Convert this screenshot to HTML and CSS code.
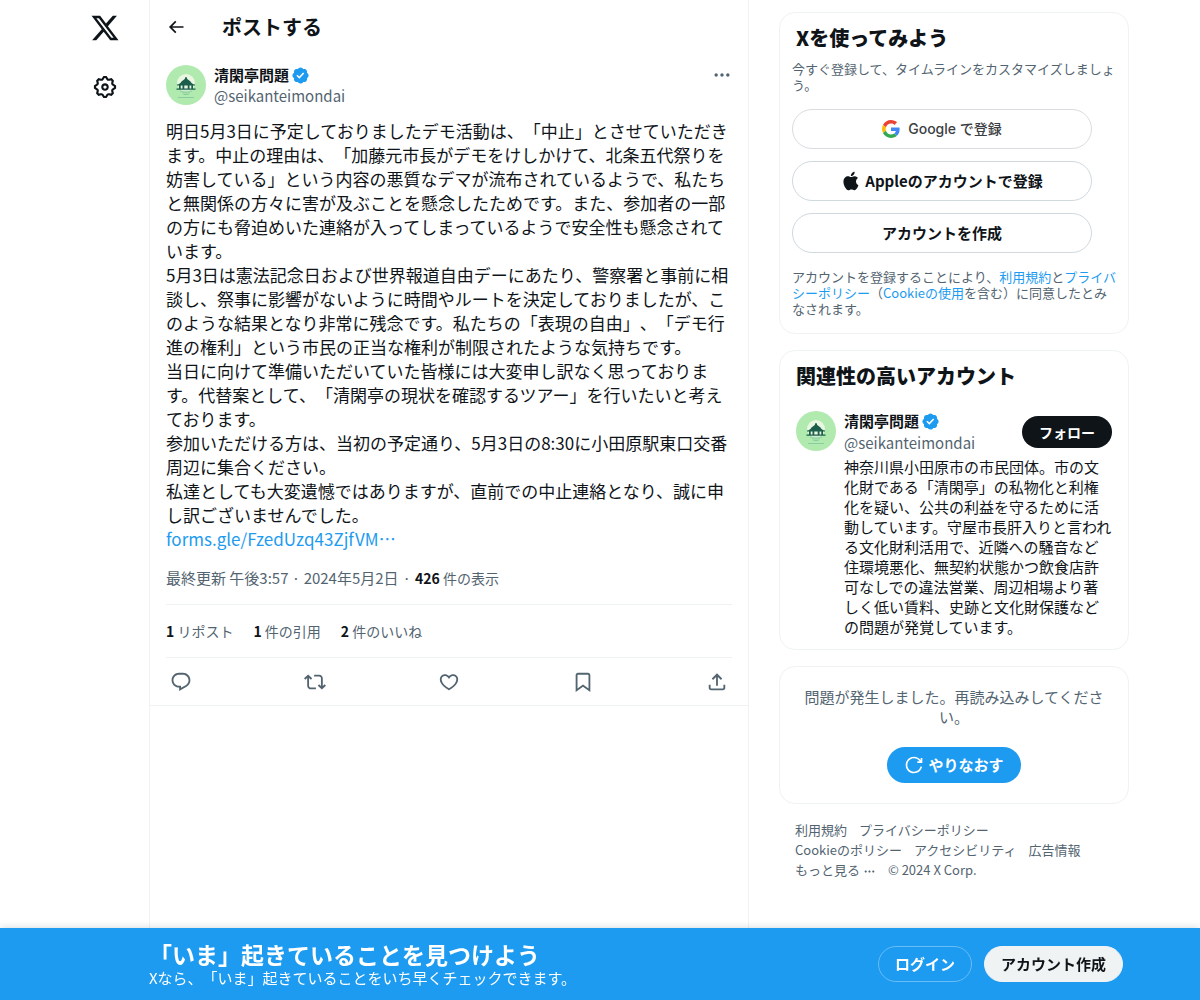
FILE: index.html
```html
<!DOCTYPE html>
<html lang="ja">
  <head>
    <meta charset="utf-8" />
    <title>清閑亭問題 / X</title>
    <meta name="viewport" content="width=device-width, initial-scale=1" />
    <link rel="stylesheet" href="styles.css">
  </head>
  <body>
    <svg class="symbols" aria-hidden="true">
      <symbol id="icon-verified" viewBox="0 0 22 22">
        <path fill="#1d9bf0" d="M20.396 11c-.018-.646-.215-1.275-.57-1.816-.354-.54-.852-.972-1.438-1.246.223-.607.27-1.264.14-1.897-.131-.634-.437-1.218-.882-1.687-.47-.445-1.053-.75-1.687-.882-.633-.13-1.29-.083-1.897.14-.273-.587-.704-1.086-1.245-1.44S11.647 1.62 11 1.604c-.646.017-1.273.213-1.813.568s-.969.854-1.24 1.44c-.608-.223-1.267-.272-1.902-.14-.635.13-1.22.436-1.69.882-.445.47-.749 1.055-.878 1.688-.13.633-.08 1.29.144 1.896-.587.274-1.087.705-1.443 1.245-.356.54-.555 1.17-.574 1.817.02.647.218 1.276.574 1.817.356.54.856.972 1.443 1.245-.224.606-.274 1.263-.144 1.896.13.634.433 1.218.877 1.688.47.443 1.054.747 1.687.878.633.132 1.29.084 1.897-.136.274.586.705 1.084 1.246 1.439.54.354 1.17.551 1.816.569.647-.016 1.276-.213 1.817-.567s.972-.854 1.245-1.44c.604.239 1.266.296 1.903.164.636-.132 1.22-.447 1.68-.907.46-.46.776-1.044.908-1.681s.075-1.299-.165-1.903c.586-.274 1.084-.705 1.439-1.246.354-.54.551-1.17.569-1.816zM9.662 14.85l-3.429-3.428 1.293-1.302 2.072 2.072 4.4-4.794 1.347 1.246z" />
      </symbol>
      <symbol id="avatar" viewBox="0 0 40 40">
        <circle cx="20" cy="20" r="20" fill="#b1eaae" />
        <circle cx="20" cy="18" r="9" fill="#e9f6e0" />
        <path fill="#1b5e4b" d="M19.200 12.300h1.600l.4 1.700 3.300 2.500h-9l3.300-2.500zM11 19.500c2.400-.3 3.500-1.300 4.500-3h9c1 1.700 2.100 2.700 4.500 3v1H11z" />
        <path fill="#1b5e4b" d="M13 20h1.700v4H13zM16.500 20h1.800v4h-1.800zM21.700 20h1.800v4h-1.800zM25.300 20H27v4h-1.700zM10.500 23.500h19v1.200h-19z" />
        <path fill="#7cc49a" d="M14 25.800h12v.8H14zM16 27.500h8v.8h-8zM17.500 29h5v.7h-5zM12 32h16v.8H12z" />
      </symbol>
    </svg>

    <div class="layout">
      <header class="nav">
        <a class="nav-link" href="#" aria-label="X">
          <svg class="icon-logo" viewBox="0 0 24 24"><path d="M18.244 2.25h3.308l-7.227 8.26 8.502 11.24H16.17l-5.214-6.817L4.99 21.75H1.68l7.73-8.835L1.254 2.25H8.080l4.713 6.231zm-1.161 17.520h1.833L7.084 4.126H5.117z" /></svg>
        </a>
        <a class="nav-link" href="#" aria-label="設定">
          <svg class="icon-settings" viewBox="0 0 24 24"><path d="M10.540 1.750h2.920l1.570 2.360c.11.17.32.25.53.21l2.530-.59 2.170 2.170-.58 2.540c-.05.2.04.41.21.53l2.360 1.570v2.920l-2.360 1.570c-.17.12-.26.33-.21.53l.58 2.540-2.170 2.170-2.530-.59c-.21-.04-.42.04-.53.21l-1.570 2.360h-2.920l-1.580-2.360c-.11-.17-.32-.25-.52-.21l-2.540.59-2.170-2.170.58-2.540c.05-.2-.03-.41-.21-.53l-2.350-1.570v-2.920L4.100 8.970c.18-.12.26-.33.21-.53L3.730 5.900 5.900 3.730l2.540.59c.2.04.41-.04.52-.21l1.580-2.360zm1.070 2l-.98 1.470C10.050 6.080 9 6.500 7.990 6.270l-1.460-.34-.6.6.33 1.460c.24 1.010-.18 2.070-1.050 2.640l-1.460.98v.78l1.460.98c.87.57 1.290 1.630 1.050 2.640l-.33 1.460.6.6 1.460-.34c1.010-.23 2.060.19 2.640 1.050l.98 1.470h.78l.97-1.470c.58-.86 1.630-1.280 2.650-1.050l1.450.34.61-.6-.34-1.460c-.23-1.010.18-2.070 1.050-2.640l1.470-.98v-.78l-1.470-.98c-.87-.57-1.280-1.630-1.050-2.640l.34-1.460-.61-.6-1.450.34c-1.020.23-2.070-.19-2.650-1.050l-.97-1.470h-.78zM12 10.500c-.83 0-1.500.67-1.500 1.500s.67 1.500 1.500 1.500c.82 0 1.500-.67 1.500-1.500s-.68-1.500-1.500-1.500zM8.500 12c0-1.930 1.560-3.500 3.500-3.500 1.930 0 3.500 1.570 3.500 3.500s-1.570 3.500-3.500 3.500c-1.940 0-3.500-1.570-3.500-3.500z" /></svg>
        </a>
      </header>

      <main class="timeline">
        <div class="topbar">
          <button class="icon-button" type="button" aria-label="戻る">
            <svg class="icon-back" viewBox="0 0 24 24"><path d="M7.414 13l5.043 5.040-1.414 1.420L3.586 12l7.457-7.460 1.414 1.420L7.414 11H21v2H7.414z" /></svg>
          </button>
          <h1>ポストする</h1>
        </div>

        <article class="post">
          <div class="author">
            <svg class="avatar"><use href="#avatar" /></svg>
            <div class="author-names">
              <a class="name" href="#">清閑亭問題 <svg class="verified"><use href="#icon-verified" /></svg></a>
              <a class="handle" href="#">@seikanteimondai</a>
            </div>
            <button class="icon-button more" type="button" aria-label="もっと見る">
              <svg class="icon-more" viewBox="0 0 24 24"><path d="M3 12c0-1.100.9-2 2-2s2 .9 2 2-.9 2-2 2-2-.9-2-2zm9 2c1.100 0 2-.9 2-2s-.9-2-2-2-2 .9-2 2 .9 2 2 2zm7 0c1.100 0 2-.9 2-2s-.9-2-2-2-2 .9-2 2 .9 2 2 2z" /></svg>
            </button>
          </div>

          <div class="post-text">
            <p>明日5月3日に予定しておりましたデモ活動は、「中止」とさせていただきます。中止の理由は、「加藤元市長がデモをけしかけて、北条五代祭りを妨害している」という内容の悪質なデマが流布されているようで、私たちと無関係の方々に害が及ぶことを懸念したためです。また、参加者の一部の方にも脅迫めいた連絡が入ってしまっているようで安全性も懸念されています。</p>
            <p>5月3日は憲法記念日および世界報道自由デーにあたり、警察署と事前に相談し、祭事に影響がないように時間やルートを決定しておりましたが、このような結果となり非常に残念です。私たちの「表現の自由」、「デモ行進の権利」という市民の正当な権利が制限されたような気持ちです。</p>
            <p>当日に向けて準備いただいていた皆様には大変申し訳なく思っております。代替案として、「清閑亭の現状を確認するツアー」を行いたいと考えております。</p>
            <p>参加いただける方は、当初の予定通り、5月3日の8:30に小田原駅東口交番周辺に集合ください。</p>
            <p>私達としても大変遺憾ではありますが、直前での中止連絡となり、誠に申し訳ございませんでした。</p>
            <p><a href="#">forms.gle/FzedUzq43ZjfVM…</a></p>
          </div>

          <div class="meta">
            <a href="#">最終更新 午後3:57 · 2024年5月2日</a>
            <span>·</span>
            <span class="views"><b>426</b> 件の表示</span>
          </div>

          <div class="stats">
            <a href="#"><b>1</b> リポスト</a>
            <a href="#"><b>1</b> 件の引用</a>
            <a href="#"><b>2</b> 件のいいね</a>
          </div>

          <div class="actions">
            <button class="icon-button" type="button" aria-label="返信">
              <svg viewBox="0 0 24 24"><path d="M1.751 10c0-4.420 3.584-8 8.005-8h4.366c4.490 0 8.129 3.640 8.129 8.130 0 2.960-1.607 5.680-4.196 7.110l-8.054 4.460v-3.690h-.067c-4.490.1-8.183-3.510-8.183-8.010zm8.005-6c-3.317 0-6.005 2.690-6.005 6 0 3.370 2.770 6.080 6.138 6.010l.351-.01h1.761v2.300l5.087-2.810c1.951-1.080 3.163-3.130 3.163-5.360 0-3.390-2.744-6.130-6.129-6.130H9.756z" /></svg>
            </button>
            <button class="icon-button" type="button" aria-label="リポスト">
              <svg viewBox="0 0 24 24"><path d="M4.500 3.880l4.432 4.140-1.364 1.460L5.500 7.550V16c0 1.100.896 2 2 2H13v2H7.500c-2.209 0-4-1.790-4-4V7.550L1.432 9.480.068 8.020 4.500 3.880zM16.500 6H11V4h5.500c2.209 0 4 1.790 4 4v8.450l2.068-1.930 1.364 1.460-4.432 4.140-4.432-4.140 1.364-1.460 2.068 1.930V8c0-1.100-.896-2-2-2z" /></svg>
            </button>
            <button class="icon-button" type="button" aria-label="いいね">
              <svg viewBox="0 0 24 24"><path d="M16.697 5.500c-1.222-.06-2.679.51-3.890 2.160l-.805 1.090-.806-1.090C9.984 6.010 8.526 5.440 7.304 5.500c-1.243.07-2.349.78-2.910 1.910-.552 1.120-.633 2.780.479 4.820 1.074 1.970 3.257 4.270 7.129 6.610 3.870-2.340 6.052-4.640 7.126-6.610 1.111-2.040 1.030-3.700.477-4.820-.561-1.130-1.666-1.840-2.908-1.910zm4.187 7.690c-1.351 2.480-4.001 5.120-8.379 7.670l-.503.3-.504-.3c-4.379-2.550-7.029-5.190-8.382-7.670-1.360-2.500-1.410-4.860-.514-6.670.887-1.790 2.647-2.910 4.601-3.010 1.651-.09 3.368.56 4.798 2.010 1.429-1.450 3.146-2.100 4.796-2.010 1.954.1 3.714 1.220 4.601 3.010.896 1.810.846 4.170-.514 6.670z" /></svg>
            </button>
            <button class="icon-button" type="button" aria-label="ブックマーク">
              <svg viewBox="0 0 24 24"><path d="M4 4.500C4 3.120 5.119 2 6.500 2h11C18.881 2 20 3.120 20 4.500v18.440l-8-5.710-8 5.710V4.500zM6.500 4c-.276 0-.5.22-.5.5v14.560l6-4.290 6 4.290V4.500c0-.28-.224-.5-.5-.5h-11z" /></svg>
            </button>
            <button class="icon-button" type="button" aria-label="共有">
              <svg viewBox="0 0 24 24"><path d="M12 2.590l5.700 5.700-1.410 1.420L13 6.410V16h-2V6.410l-3.300 3.300-1.410-1.420L12 2.590zM21 15l-.02 3.510c0 1.380-1.120 2.490-2.500 2.490H5.500C4.110 21 3 19.880 3 18.500V15h2v3.500c0 .28.22.5.5.5h12.980c.28 0 .5-.22.5-.5L19 15h2z" /></svg>
            </button>
          </div>
        </article>
      </main>

      <aside class="sidebar">
        <section class="card signup">
          <h2>Xを使ってみよう</h2>
          <p>今すぐ登録して、タイムラインをカスタマイズしましょう。</p>
          <button class="pill google" type="button">
            <svg viewBox="0 0 48 48">
              <path fill="#ea4335" d="M24 9.500c3.540 0 6.710 1.220 9.210 3.600l6.850-6.850C35.900 2.380 30.470 0 24 0 14.620 0 6.510 5.380 2.560 13.220l7.980 6.190C12.430 13.720 17.740 9.500 24 9.500z" />
              <path fill="#4285f4" d="M46.980 24.550c0-1.570-.15-3.090-.38-4.550H24v9.020h12.940c-.58 2.960-2.260 5.480-4.780 7.180l7.730 6c4.510-4.180 7.090-10.360 7.090-17.650z" />
              <path fill="#fbbc05" d="M10.530 28.590c-.48-1.450-.76-2.990-.76-4.590s.27-3.140.76-4.590l-7.980-6.190C.92 16.460 0 20.120 0 24c0 3.880.92 7.540 2.560 10.780l7.970-6.190z" />
              <path fill="#34a853" d="M24 48c6.480 0 11.930-2.130 15.890-5.810l-7.730-6c-2.150 1.450-4.920 2.300-8.160 2.300-6.260 0-11.570-4.220-13.470-9.910l-7.980 6.190C6.510 42.620 14.620 48 24 48z" />
            </svg>
            <span>Google で登録</span>
          </button>
          <button class="pill apple" type="button">
            <svg viewBox="0 0 24 24"><path d="M16.365 1.430c0 1.140-.493 2.270-1.177 3.080-.744.9-1.990 1.570-2.987 1.570-.12 0-.23-.02-.3-.03-.01-.06-.04-.22-.04-.39 0-1.150.572-2.270 1.206-2.980.804-.94 2.142-1.640 3.248-1.680.03.13.05.28.05.43zm4.565 15.710c-.03.07-.463 1.580-1.518 3.120-.945 1.340-1.940 2.710-3.430 2.710-1.517 0-1.900-.88-3.630-.88-1.698 0-2.302.91-3.670.91-1.377 0-2.332-1.260-3.428-2.800-1.287-1.820-2.323-4.630-2.323-7.280 0-4.280 2.797-6.550 5.552-6.550 1.448 0 2.675.95 3.600.95.865 0 2.222-1.010 3.902-1.010.613 0 2.886.06 4.374 2.190-.13.09-2.383 1.370-2.383 4.190 0 3.260 2.854 4.420 2.955 4.450z" /></svg>
            <span>Appleのアカウントで登録</span>
          </button>
          <button class="pill" type="button">アカウントを作成</button>
          <p class="terms">アカウントを登録することにより、<a href="#">利用規約</a>と<a href="#">プライバシーポリシー</a>（<a href="#">Cookieの使用</a>を含む）に同意したとみなされます。</p>
        </section>

        <section class="card related">
          <h2>関連性の高いアカウント</h2>
          <div class="account">
            <svg class="avatar"><use href="#avatar" /></svg>
            <div class="account-body">
              <div class="account-head">
                <div class="author-names">
                  <a class="name" href="#">清閑亭問題 <svg class="verified"><use href="#icon-verified" /></svg></a>
                  <a class="handle" href="#">@seikanteimondai</a>
                </div>
                <button class="follow" type="button">フォロー</button>
              </div>
              <p>神奈川県小田原市の市民団体。市の文化財である「清閑亭」の私物化と利権化を疑い、公共の利益を守るために活動しています。守屋市長肝入りと言われる文化財利活用で、近隣への騒音など住環境悪化、無契約状態かつ飲食店許可なしでの違法営業、周辺相場より著しく低い賃料、史跡と文化財保護などの問題が発覚しています。</p>
            </div>
          </div>
        </section>

        <section class="card error">
          <p>問題が発生しました。再読み込みしてください。</p>
          <button class="retry" type="button">
            <svg viewBox="0 0 24 24"><path d="M12 4c-4.418 0-8 3.580-8 8s3.582 8 8 8c3.806 0 6.993-2.660 7.802-6.220l1.950.44C20.742 18.670 16.760 22 12 22 6.477 22 2 17.520 2 12S6.477 2 12 2c3.272 0 6.176 1.570 8 4V3.500h2v6h-6v-2h2.616C17.175 5.390 14.749 4 12 4z" /></svg>
            <span>やりなおす</span>
          </button>
        </section>

        <nav class="footer-links">
          <a href="#">利用規約</a>
          <a href="#">プライバシーポリシー</a>
          <a href="#">Cookieのポリシー</a>
          <a href="#">アクセシビリティ</a>
          <a href="#">広告情報</a>
          <a href="#">もっと見る <svg viewBox="0 0 24 24"><path d="M3 12c0-1.100.9-2 2-2s2 .9 2 2-.9 2-2 2-2-.9-2-2zm9 2c1.100 0 2-.9 2-2s-.9-2-2-2-2 .9-2 2 .9 2 2 2zm7 0c1.100 0 2-.9 2-2s-.9-2-2-2-2 .9-2 2 .9 2 2 2z" /></svg></a>
          <span>© 2024 X Corp.</span>
        </nav>
      </aside>
    </div>

    <div class="banner">
      <div class="banner-inner">
        <div class="banner-text">
          <h2>「いま」起きていることを見つけよう</h2>
          <p>Xなら、「いま」起きていることをいち早くチェックできます。</p>
        </div>
        <button class="login" type="button">ログイン</button>
        <button class="create" type="button">アカウント作成</button>
      </div>
    </div>
  </body>
</html>
```
FILE: styles.css
```css
* {
  box-sizing: border-box;
}

body {
  margin: 0;
  background-color: white;
  color: #0f1419;
  font-family: "Noto Sans CJK JP", sans-serif;
  font-size: 15px;
  line-height: 20px;
  text-spacing-trim: space-all;
}

h1,
h2,
p {
  margin: 0;
}

a {
  color: inherit;
  text-decoration: none;
}

button {
  padding: 0;
  border: 0;
  background: none;
  color: inherit;
  font: inherit;
  cursor: pointer;
}

svg {
  flex: none;
  fill: currentColor;
}

.symbols {
  position: absolute;
  width: 0;
  height: 0;
}

.layout {
  display: flex;
  max-width: 1078px;
  min-height: 100vh;
  margin: 0 auto;
}

/* left navigation */

.nav {
  flex: none;
  width: 88px;
  padding-top: 2px;
}

.nav-link {
  display: flex;
  align-items: center;
  justify-content: center;
  height: 52px;
  margin-bottom: 7px;
}

.icon-logo {
  width: 30px;
  height: 30px;
}

.icon-settings {
  width: 26px;
  height: 26px;
}

/* post column */

.timeline {
  flex: 0 1 600px;
  border: solid #eff3f4;
  border-width: 0 1px;
}

.topbar {
  display: flex;
  align-items: center;
  height: 53px;
  padding: 0 16px;
}

.topbar h1 {
  margin-left: 36px;
  font-size: 20px;
  line-height: 24px;
}

.icon-button {
  display: flex;
}

.icon-back {
  width: 20px;
  height: 20px;
}

.post {
  padding: 12px 16px 0;
  border-bottom: 1px solid #eff3f4;
}

.author {
  display: flex;
}

.avatar {
  width: 40px;
  height: 40px;
}

.author-names {
  display: flex;
  flex-direction: column;
  flex: 1;
  gap: 1px;
  margin-left: 8px;
}

.name {
  display: flex;
  align-items: center;
  gap: 2px;
  font-weight: bold;
}

.verified {
  width: 19px;
  height: 19px;
}

.handle {
  color: #536471;
}

.more {
  align-self: flex-start;
  color: #536471;
}

.icon-more {
  width: 20px;
  height: 20px;
}

.post-text {
  margin-top: 13px;
  font-size: 17px;
  line-height: 24px;
}

.post-text a,
.terms a {
  color: #1d9bf0;
}

.meta {
  display: flex;
  gap: 4px;
  padding: 17px 0 16px;
  color: #536471;
}

.views {
  font-size: 14px;
}

b {
  color: #0f1419;
}

.stats {
  display: flex;
  gap: 20px;
  padding: 16px 0;
  border: solid #eff3f4;
  border-width: 1px 0;
  color: #536471;
  font-size: 14px;
}

.actions {
  display: flex;
  align-items: center;
  justify-content: space-between;
  height: 47px;
  padding: 0 4px;
  color: #536471;
}

.actions svg {
  width: 22px;
  height: 22px;
}

/* sidebar */

.sidebar {
  flex: none;
  width: 350px;
  margin-left: 30px;
  padding: 12px 0 100px;
}

.card {
  margin-bottom: 16px;
  border: 1px solid #eff3f4;
  border-radius: 16px;
}

.card h2 {
  font-size: 20px;
  font-weight: 900;
  line-height: 26px;
}

.signup {
  padding: 12px 8px 16px 12px;
}

.signup h2 {
  padding: 0 4px;
}

.signup p {
  margin: 10px 0 16px;
  color: #536471;
  font-size: 13px;
  line-height: 16px;
}

.signup .terms {
  margin: 16px 0 0;
}

.pill {
  display: flex;
  align-items: center;
  justify-content: center;
  gap: 4px;
  width: 300px;
  max-width: 100%;
  height: 40px;
  margin-bottom: 12px;
  border: 1px solid #cfd9de;
  border-radius: 20px;
  font-weight: bold;
}

.pill svg {
  width: 20px;
  height: 20px;
}

.google {
  gap: 8px;
  border-color: #dadce0;
  color: #3c4043;
  font-family: Inter, "Noto Sans CJK JP", sans-serif;
  font-size: 14px;
  font-weight: 500;
}

.google svg {
  width: 18px;
  height: 18px;
}

.related {
  padding: 12px 16px;
}

.account {
  display: flex;
  padding-top: 22px;
}

.account-body {
  flex: 1;
  margin-left: 8px;
}

.account-head {
  display: flex;
  align-items: center;
  margin-bottom: 4px;
}

.account-head .author-names {
  gap: 2px;
  margin-left: 0;
}

.follow {
  height: 32px;
  padding: 0 17px;
  border-radius: 16px;
  background-color: #0f1419;
  color: white;
  font-size: 14px;
  font-weight: bold;
}

.error {
  display: flex;
  flex-direction: column;
  align-items: center;
  padding: 20px;
  color: #536471;
  text-align: center;
}

.retry {
  display: flex;
  align-items: center;
  gap: 4px;
  height: 36px;
  margin-top: 20px;
  padding: 0 17px;
  border-radius: 18px;
  background-color: #1d9bf0;
  color: white;
  font-weight: bold;
}

.retry svg {
  width: 20px;
  height: 20px;
}

.footer-links {
  display: flex;
  flex-wrap: wrap;
  padding: 0 16px;
  color: #536471;
  font-size: 13px;
}

.footer-links > * {
  margin-right: 12px;
}

.footer-links svg {
  width: 13px;
  height: 13px;
  vertical-align: -3px;
}

/* login banner */

.banner {
  position: fixed;
  right: 0;
  bottom: 0;
  left: 0;
  background-color: #1d9bf0;
  box-shadow: 0 0 8px rgba(101, 119, 134, 0.3);
  color: white;
}

.banner-inner {
  display: flex;
  align-items: center;
  gap: 12px;
  max-width: 1078px;
  margin: 0 auto;
  padding: 12px 16px 12px 88px;
}

.banner-text {
  flex: 1;
}

.banner h2 {
  font-size: 23px;
  line-height: 28px;
}

.login,
.create {
  height: 36px;
  padding: 0 16px;
  border: 1px solid #69bdf5;
  border-radius: 18px;
  font-weight: bold;
}

.create {
  border-color: #eff3f4;
  background-color: #eff3f4;
  color: #0f1419;
}
```
